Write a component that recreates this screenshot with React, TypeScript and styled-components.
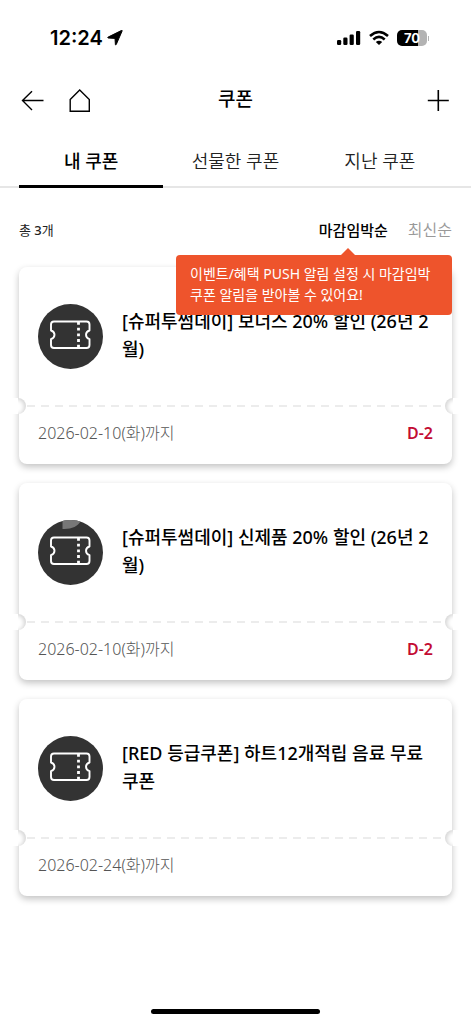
import React, { useState } from "react";
import styled, { createGlobalStyle } from "styled-components";

const GlobalStyle = createGlobalStyle`
  *, *::before, *::after { box-sizing: border-box; }
  body {
    margin: 0;
    background: #fff;
    color: #000;
    font-family: "Noto Sans", "Noto Sans CJK KR", sans-serif;
  }
  button {
    margin: 0;
    padding: 0;
    border: 0;
    background: none;
    color: inherit;
    font: inherit;
    cursor: pointer;
  }
  svg { display: block; }
`;

const Screen = styled.div`
  display: flex;
  flex-direction: column;
  min-height: 100vh;
`;

const StatusBar = styled.div`
  display: flex;
  align-items: center;
  justify-content: space-between;
  height: 76px;
  padding: 0 42px 0 50px;
`;

const StatusGroup = styled.div<{ $gap: number }>`
  display: flex;
  align-items: center;
  gap: ${(p) => p.$gap}px;
`;

const Clock = styled.span`
  font: 600 20px/24px Inter, sans-serif;
`;

const Battery = styled.div`
  display: flex;
  align-items: center;
  gap: 1px;
`;

const BatteryBody = styled.span`
  width: 30px;
  height: 16px;
  border-radius: 5px;
  background: linear-gradient(to right, #000 70%, #b3b3b3 70%);
  color: #fff;
  font: 700 13px/16px Inter, sans-serif;
  text-align: center;
`;

const BatteryTip = styled.span`
  width: 1px;
  height: 5px;
  background: #b3b3b3;
`;

const Header = styled.header`
  display: grid;
  grid-template-columns: 1fr auto 1fr;
  align-items: center;
  height: 48px;
  padding: 0 20px;
`;

const HeaderActions = styled.div`
  display: flex;
  gap: 23px;
`;

const IconButton = styled.button`
  width: 24px;
  height: 24px;
`;

const EndButton = styled(IconButton)`
  justify-self: end;
`;

const Title = styled.h1`
  margin: 0;
  padding-bottom: 2px;
  font-size: 19px;
  line-height: 24px;
  font-weight: 500;
`;

const Tabs = styled.div`
  display: flex;
  height: 64px;
  padding: 0 19px;
  background: linear-gradient(#e6e6e6, #e6e6e6) bottom / 100% 2px no-repeat;
`;

const Tab = styled.button<{ $active: boolean }>`
  flex: 1;
  padding-top: 11px;
  border-bottom: 3px solid ${(p) => (p.$active ? "#000" : "transparent")};
  color: ${(p) => (p.$active ? "#000" : "#222")};
  font-size: 18px;
  font-weight: ${(p) => (p.$active ? 500 : 350)};
`;

const Content = styled.main`
  padding: 0 19px;
`;

const Toolbar = styled.div`
  position: relative;
  display: flex;
  align-items: center;
  justify-content: space-between;
  height: 79px;
  padding-top: 5px;
`;

const Count = styled.p`
  margin: 0;
  color: #222;
  font-size: 13px;
  line-height: 20px;
`;

const CountNumber = styled.span`
  font-weight: 500;
`;

const SortOptions = styled.div`
  display: flex;
  gap: 20px;
`;

const SortButton = styled.button<{ $active: boolean }>`
  color: ${(p) => (p.$active ? "#000" : "#999")};
  font-size: ${(p) => (p.$active ? 15 : 16)}px;
  line-height: 20px;
  font-weight: ${(p) => (p.$active ? 500 : 350)};
`;

const Tooltip = styled.div`
  position: absolute;
  z-index: 1;
  top: 67px;
  right: 0;
  width: 276px;
  padding: 8px 14px 10px;
  border-radius: 4px;
  background: #ee542c;
  color: #fff;
  font-size: 14px;
  line-height: 21px;
  font-weight: 400;

  &::before {
    content: "";
    position: absolute;
    top: -7px;
    right: 97px;
    border: solid transparent;
    border-width: 0 7px 7px;
    border-bottom-color: #ee542c;
  }
`;

const CouponList = styled.ul`
  display: flex;
  flex-direction: column;
  gap: 19px;
  margin: 0;
  padding: 0;
  list-style: none;
`;

const Card = styled.li`
  border-radius: 8px;
  background: #fff;
  box-shadow: 0 3px 7px rgba(0, 0, 0, 0.24);
`;

const CardBody = styled.div`
  display: flex;
  align-items: center;
  gap: 19px;
  min-height: 138px;
  padding: 0 18px 0 19px;
`;

const CouponBadge = styled.div`
  flex: none;
  width: 65px;
  height: 65px;
`;

const CouponName = styled.h2`
  margin: 0;
  padding-bottom: 2px;
  font-size: 18px;
  line-height: 28px;
  font-weight: 500;
`;

const Perforation = styled.div`
  position: relative;
  height: 2px;
  margin: 0 8px;
  background: repeating-linear-gradient(to right, #ececec 0 8px, transparent 8px 14px);
`;

const Notch = styled.span<{ $side: "left" | "right" }>`
  position: absolute;
  top: -7px;
  ${(p) => p.$side}: -18px;
  width: 17px;
  height: 16px;
  border-radius: 8px;
  background: #fff;
  box-shadow: inset ${(p) => (p.$side === "left" ? -2 : 2)}px 1px 4px rgba(0, 0, 0, 0.17);

  &::after {
    content: "";
    position: absolute;
    top: 0;
    bottom: 0;
    ${(p) => p.$side}: 0;
    width: 9px;
    background: #fff;
  }
`;

const CardFooter = styled.div`
  display: flex;
  align-items: center;
  justify-content: space-between;
  height: 57px;
  padding: 0 19px 6px;
  font-size: 16px;
  line-height: 24px;
`;

const Expiry = styled.span`
  color: #555;
  font-weight: 300;
`;

const DaysLeft = styled.strong`
  color: #c30b33;
  font-weight: 600;
`;

const HomeIndicator = styled.div`
  width: 36%;
  height: 5px;
  margin: auto auto 10px;
  border-radius: 3px;
  background: #000;
`;

const CouponIcon = ({ glare }: { glare?: boolean }) => (
  <svg width="65" height="65" viewBox="0 0 65 65" fill="none" aria-hidden="true">
    <circle cx="32.5" cy="32.5" r="32.5" fill="#333" />
    {glare && <path d="M24.5 1A32.5 32.5 0 0 1 42.500 1.600C40 6.500 33 9.500 24.500 9Z" fill="#777" />}
    <path
      d="M16 17.500H48.500Q51.500 17.500 51.500 20.500V26.500Q48 27.600 48 30.800Q48 34 51.500 35.100V41Q51.500 44 48.500 44H16Q13 44 13 41V35.100Q16.500 34 16.500 30.800Q16.500 27.600 13 26.500V20.500Q13 17.500 16 17.500Z"
      stroke="#fff"
      strokeWidth="1.900"
      strokeLinejoin="round"
    />
    <path d="M40.500 18V44" stroke="#fff" strokeWidth="2.800" strokeDasharray="2.800 2.900" />
  </svg>
);

const coupons = [
  { name: "[슈퍼투썸데이] 보너스 20% 할인 (26년 2월)", expiry: "2026-02-10(화)까지", left: "D-2" },
  { name: "[슈퍼투썸데이] 신제품 20% 할인 (26년 2월)", expiry: "2026-02-10(화)까지", left: "D-2", glare: true },
  { name: "[RED 등급쿠폰] 하트12개적립 음료 무료쿠폰", expiry: "2026-02-24(화)까지" },
];

const tabs = ["내 쿠폰", "선물한 쿠폰", "지난 쿠폰"];
const sorts = ["마감임박순", "최신순"];

export default function App() {
  const [tab, setTab] = useState(0);
  const [sort, setSort] = useState(0);

  return (
    <Screen>
      <GlobalStyle />
      <StatusBar>
        <StatusGroup $gap={4}>
          <Clock>12:24</Clock>
          <svg width="16" height="16" viewBox="0 0 16 16" stroke="#000" strokeWidth="1" strokeLinejoin="round" aria-hidden="true">
            <path d="M15.200 .8 9.200 14.600Q8.700 15.500 8.400 14.500L8 8.400 1.200 8Q.2 7.700 1.100 7.100L14.400 .5Q15.400 .1 15.200 .8Z" />
          </svg>
        </StatusGroup>
        <StatusGroup $gap={8}>
          <svg width="24" height="16" viewBox="0 0 24 16" aria-hidden="true">
            <rect x="0" y="10" width="4.200" height="5" rx="1.200" />
            <rect x="6.300" y="7.500" width="4.200" height="7.500" rx="1.200" />
            <rect x="12.600" y="4.500" width="4.200" height="10.500" rx="1.200" />
            <rect x="19" y="1" width="4.200" height="14" rx="1.200" />
          </svg>
          <svg width="20" height="16" viewBox="0 0 20 16" fill="none" stroke="#000" strokeWidth="2.600" aria-hidden="true">
            <path d="M1 6Q10-2 19 6" />
            <path d="M4.300 9.500Q10 4.400 15.700 9.500" />
            <path d="M6.800 12Q10 9.500 13.200 12L10 15Z" fill="#000" stroke="none" />
          </svg>
          <Battery>
            <BatteryBody>70</BatteryBody>
            <BatteryTip />
          </Battery>
        </StatusGroup>
      </StatusBar>

      <Header>
        <HeaderActions>
          <IconButton aria-label="뒤로">
            <svg width="24" height="24" viewBox="0 0 24 24" fill="none" stroke="#000" strokeWidth="1.400">
              <path d="M23.500 12.500H2.500M12 3.200 2.500 12.500 12 22" />
            </svg>
          </IconButton>
          <IconButton aria-label="홈">
            <svg width="24" height="24" viewBox="0 0 24 24" fill="none" stroke="#000" strokeWidth="1.400">
              <path d="M3.200 11.500 12.700 2 22.300 11.500V23.300H3.200Z" />
            </svg>
          </IconButton>
        </HeaderActions>
        <Title>쿠폰</Title>
        <EndButton aria-label="쿠폰 추가">
          <svg width="24" height="24" viewBox="0 0 24 24" fill="none" stroke="#000" strokeWidth="1.600">
            <path d="M11.300 2V23M.8 12.500H21.800" />
          </svg>
        </EndButton>
      </Header>

      <Tabs role="tablist">
        {tabs.map((label, i) => (
          <Tab key={label} role="tab" aria-selected={tab === i} $active={tab === i} onClick={() => setTab(i)}>
            {label}
          </Tab>
        ))}
      </Tabs>

      <Content>
        <Toolbar>
          <Count>
            총 <CountNumber>3</CountNumber>개
          </Count>
          <SortOptions>
            {sorts.map((label, i) => (
              <SortButton key={label} aria-pressed={sort === i} $active={sort === i} onClick={() => setSort(i)}>
                {label}
              </SortButton>
            ))}
          </SortOptions>
          <Tooltip role="tooltip">이벤트/혜택 PUSH 알림 설정 시 마감임박 쿠폰 알림을 받아볼 수 있어요!</Tooltip>
        </Toolbar>

        <CouponList>
          {coupons.map((c) => (
            <Card key={c.name}>
              <CardBody>
                <CouponBadge>
                  <CouponIcon glare={c.glare} />
                </CouponBadge>
                <CouponName>{c.name}</CouponName>
              </CardBody>
              <Perforation>
                <Notch $side="left" />
                <Notch $side="right" />
              </Perforation>
              <CardFooter>
                <Expiry>{c.expiry}</Expiry>
                {c.left && <DaysLeft>{c.left}</DaysLeft>}
              </CardFooter>
            </Card>
          ))}
        </CouponList>
      </Content>

      <HomeIndicator />
    </Screen>
  );
}
